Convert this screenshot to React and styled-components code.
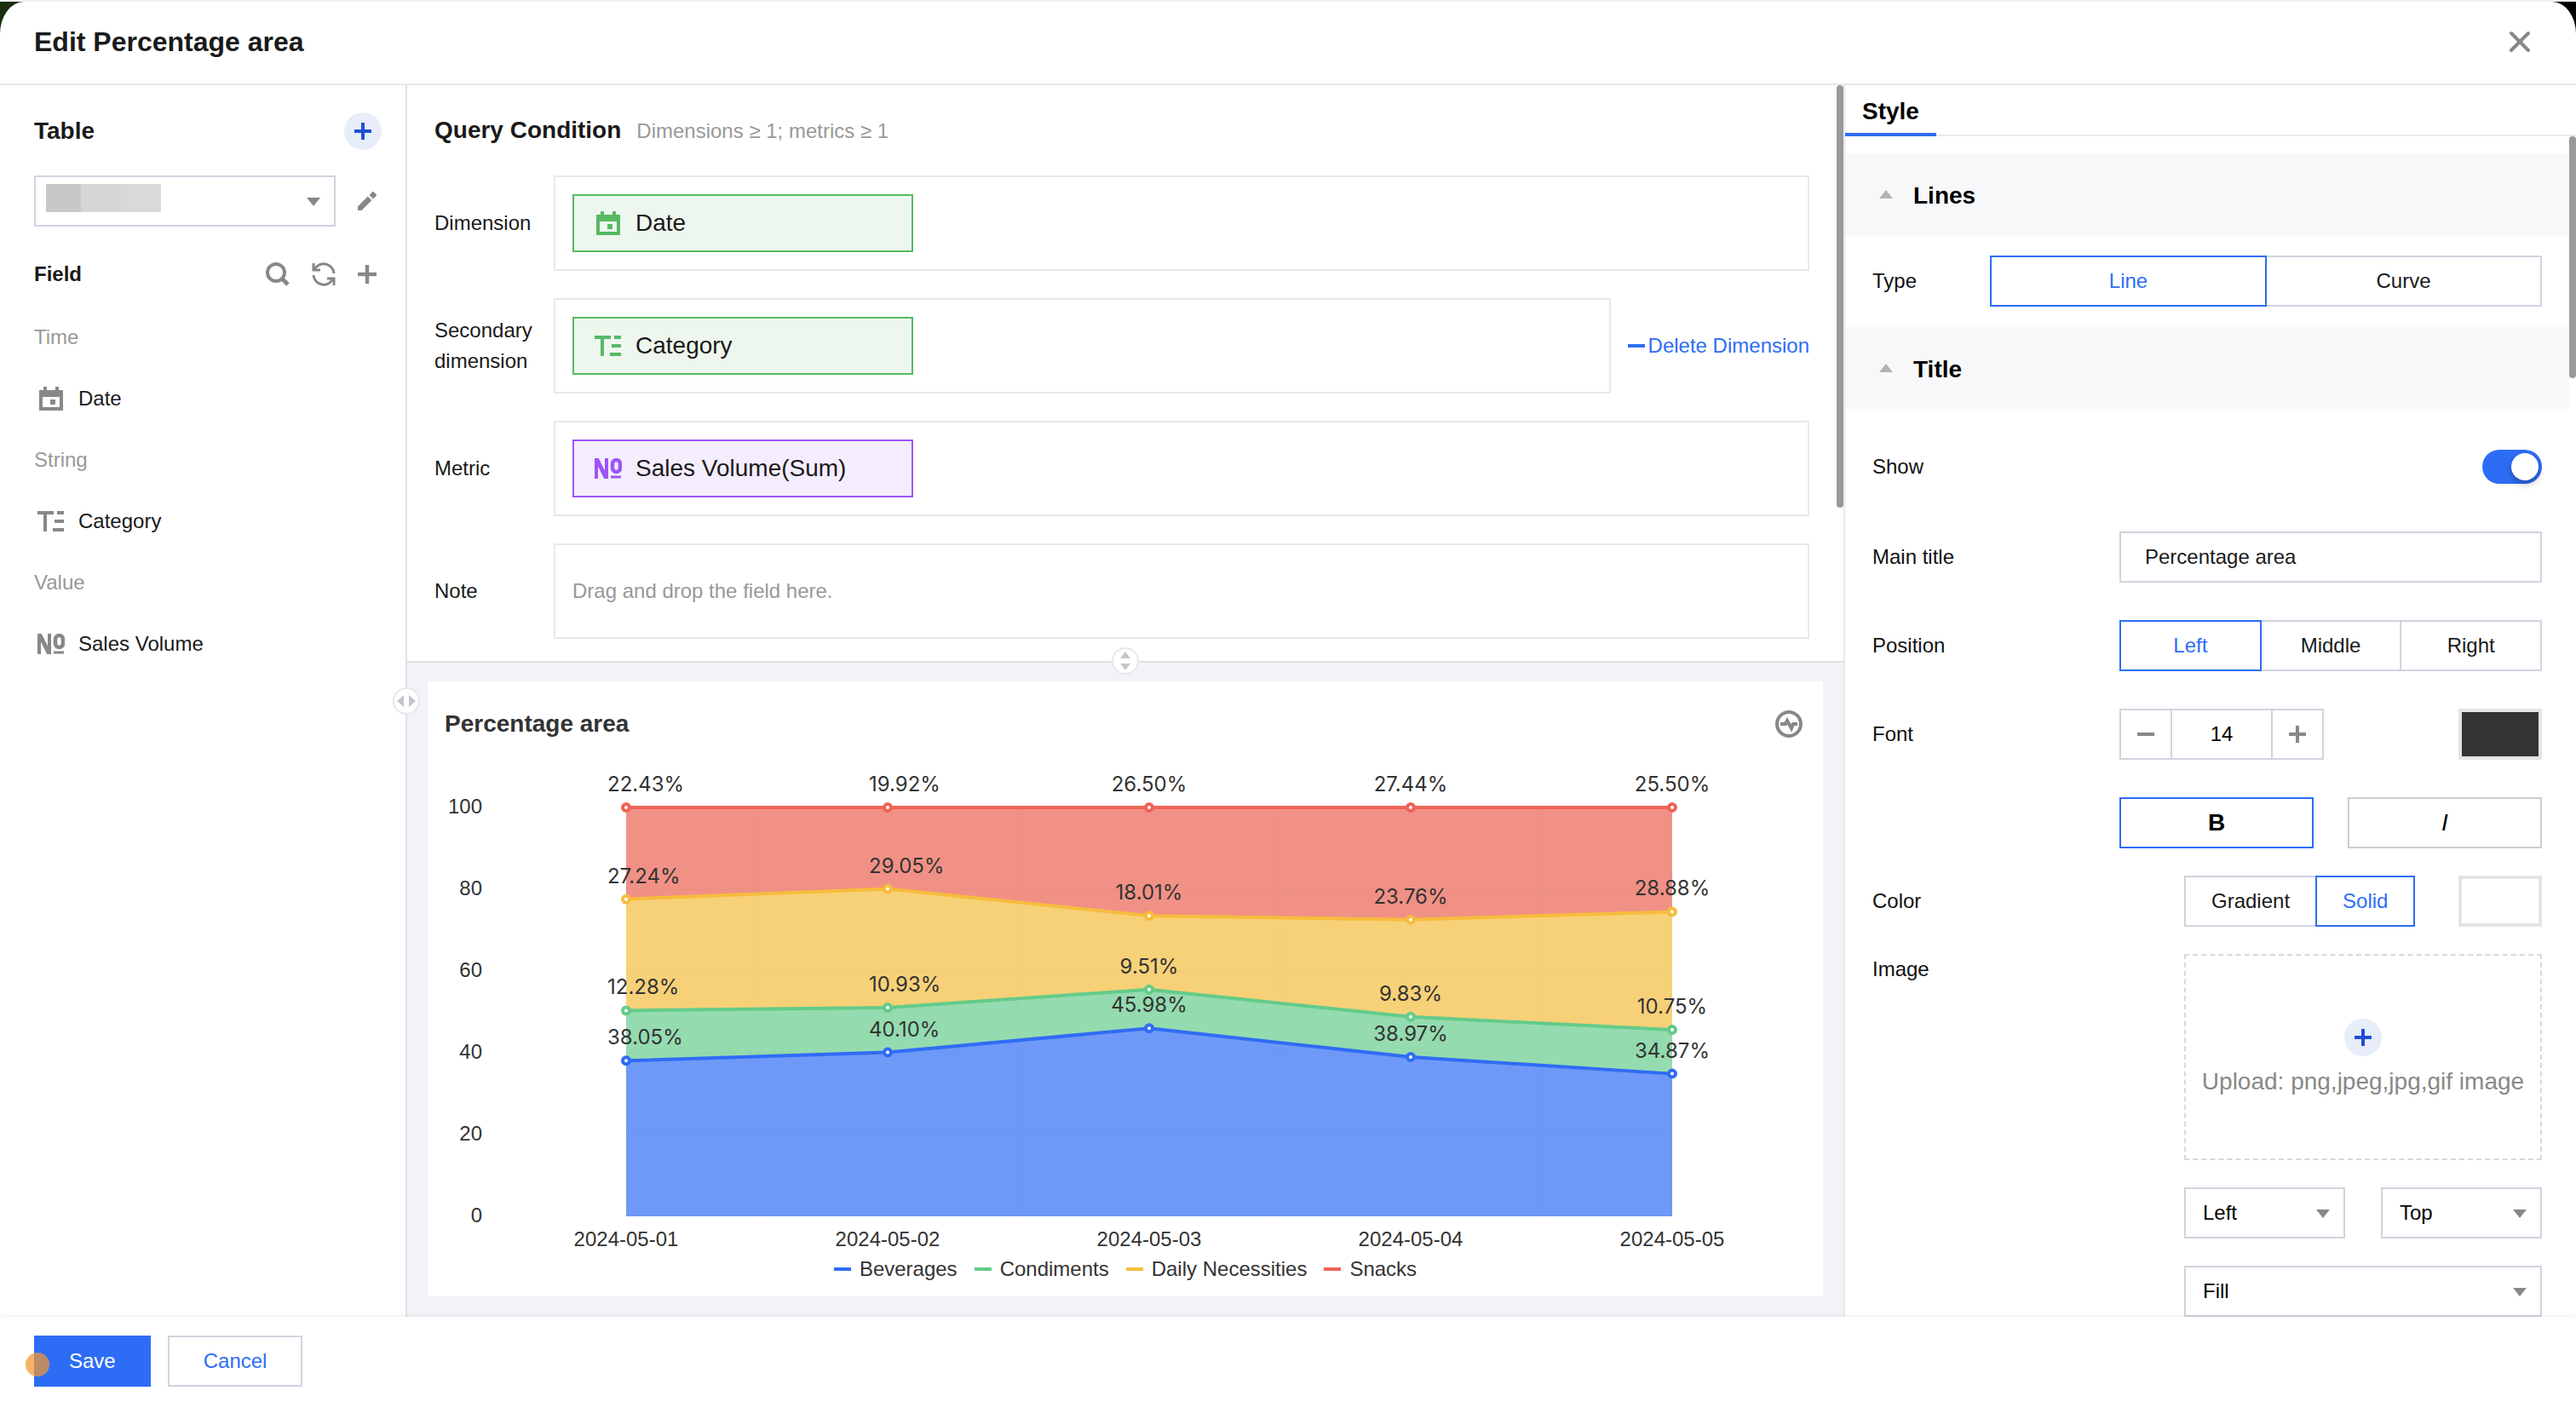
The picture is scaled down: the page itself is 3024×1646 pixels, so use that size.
import { useState } from "react";
import styled, { createGlobalStyle, css } from "styled-components";

const categories = [
  "2024-05-01",
  "2024-05-02",
  "2024-05-03",
  "2024-05-04",
  "2024-05-05",
];

const series = [
  {
    name: "Beverages",
    line: "#2f6cf6",
    area: "#6f99f8",
    values: [38.05, 40.1, 45.98, 38.97, 34.87],
  },
  {
    name: "Condiments",
    line: "#64cb8a",
    area: "#94dbaf",
    values: [12.28, 10.93, 9.51, 9.83, 10.75],
  },
  {
    name: "Daily Necessities",
    line: "#f7bc3c",
    area: "#f7d178",
    values: [27.24, 29.05, 18.01, 23.76, 28.88],
  },
  {
    name: "Snacks",
    line: "#ee6457",
    area: "#f19186",
    values: [22.43, 19.92, 26.5, 27.44, 25.5],
  },
];

const fieldGroups = [
  { title: "Time", icon: "date", field: "Date" },
  { title: "String", icon: "text", field: "Category" },
  { title: "Value", icon: "number", field: "Sales Volume" },
];

/* ---------- icons ---------- */

const TypeIcon = ({ type }) => {
  if (type === "date") {
    return (
      <svg width="32" height="28" viewBox="0 0 32 28" fill="currentColor">
        <rect x="7" y="0" width="4" height="5" />
        <rect x="21" y="0" width="4" height="5" />
        <path d="M2 4h28v24H2zM6 12v12h20V12z" fillRule="evenodd" />
        <rect x="15" y="15" width="6" height="6" />
      </svg>
    );
  }
  if (type === "text") {
    return (
      <svg width="32" height="24" viewBox="0 0 32 24" fill="currentColor">
        <rect x="0" y="0" width="19" height="4" />
        <rect x="7" y="0" width="4" height="24" />
        <rect x="23" y="0" width="8" height="4" />
        <rect x="20" y="10" width="11" height="4" />
        <rect x="18" y="20" width="13" height="4" />
      </svg>
    );
  }
  return (
    <svg
      width="32"
      height="24"
      viewBox="0 0 32 24"
      fill="none"
      stroke="currentColor"
      strokeWidth="4"
    >
      <line x1="2" y1="0" x2="2" y2="24" />
      <line x1="14" y1="0" x2="14" y2="24" />
      <line x1="2" y1="0" x2="14" y2="24" strokeWidth="5" />
      <rect x="21" y="2" width="9" height="14" rx="4.5" strokeWidth="4.5" />
      <line x1="19" y1="22" x2="31" y2="22" strokeWidth="3" />
    </svg>
  );
};

const PlusIcon = ({ size = 20 }) => (
  <svg width={size} height={size} viewBox="0 0 20 20" fill="currentColor">
    <rect x="8" y="0" width="4" height="20" />
    <rect x="0" y="8" width="20" height="4" />
  </svg>
);

const MinusIcon = () => (
  <svg width="20" height="4" viewBox="0 0 20 4" fill="currentColor">
    <rect width="20" height="4" />
  </svg>
);

const SearchIcon = () => (
  <svg
    width="28"
    height="28"
    viewBox="1 1 28 28"
    fill="none"
    stroke="currentColor"
    strokeWidth="4"
  >
    <circle cx="13" cy="13" r="10" />
    <line x1="20" y1="20" x2="27" y2="27" strokeWidth="5" />
  </svg>
);

const RefreshIcon = () => (
  <svg
    width="28"
    height="28"
    viewBox="1 1 28 28"
    fill="none"
    stroke="currentColor"
    strokeWidth="3"
  >
    <path d="M3 2v8h8" />
    <path d="M4 10a12 12 0 0 1 23 4" />
    <path d="M27 28v-8h-8" />
    <path d="M26 20a12 12 0 0 1-23-4" />
  </svg>
);

const PencilIcon = () => (
  <svg width="22" height="22" viewBox="3 3 18 18" fill="currentColor">
    <path d="M3 17.25V21h3.75L16.4 11.3l-3.75-3.75L3 17.25zM20.71 7.04a1 1 0 0 0 0-1.41l-2.34-2.34a1 1 0 0 0-1.41 0l-2.9 2.9 3.75 3.75 2.9-2.9z" />
  </svg>
);

const CloseIcon = () => (
  <svg
    width="28"
    height="28"
    viewBox="0 0 28 28"
    stroke="currentColor"
    strokeWidth="4"
    strokeLinecap="round"
  >
    <path d="M4 4l20 20M24 4L4 24" />
  </svg>
);

const PulseIcon = () => (
  <svg
    width="32"
    height="32"
    viewBox="0 0 32 32"
    fill="none"
    stroke="currentColor"
    strokeWidth="4"
  >
    <circle cx="16" cy="16" r="14" />
    <path d="M6 16h6l2-4 5 9 2-5h5" />
  </svg>
);

const Triangle = ({ up }) => (
  <svg width="16" height="10" viewBox="0 0 16 10" fill="currentColor">
    <path d={up ? "M0 10h16L8 0z" : "M0 0h16L8 10z"} />
  </svg>
);

/* ---------- chart ---------- */

const pointX = (index) => 233 + index * 307;
const pointY = (value) => 528 - value * 4.8;

const stacked = series.map((item, level) => ({
  ...item,
  points: item.values.map((_, index) => {
    const total = series
      .slice(0, level + 1)
      .reduce((sum, current) => sum + current.values[index], 0);
    return [pointX(index), pointY(Math.min(total, 100))];
  }),
}));

const PercentageChart = () => (
  <Plot viewBox="0 0 1638 576" role="img" aria-label="Percentage area">
    {[...stacked].reverse().map((item) => (
      <polygon
        key={item.name}
        fill={item.area}
        points={`${item.points.join(" ")} ${pointX(4)},528 ${pointX(0)},528`}
      />
    ))}
    <g stroke="#000" strokeOpacity="0.01" strokeWidth="2">
      {[20, 40, 60, 80].map((tick) => (
        <line
          key={tick}
          x1={pointX(0)}
          x2={pointX(4)}
          y1={pointY(tick)}
          y2={pointY(tick)}
        />
      ))}
      {[0, 1, 2, 3].map((index) => (
        <line
          key={index}
          x1={pointX(index + 0.5)}
          x2={pointX(index + 0.5)}
          y1="48"
          y2="528"
        />
      ))}
    </g>
    {stacked.map((item) => (
      <g key={item.name} stroke={item.line} strokeWidth="4">
        <polyline points={item.points.join(" ")} fill="none" />
        {item.points.map(([x, y]) => (
          <circle key={x} cx={x} cy={y} r="4" fill="#fff" />
        ))}
      </g>
    ))}
    {stacked.map((item) =>
      item.points.map(([x, y], index) => (
        <ValueText
          key={`${item.name}-${index}`}
          x={index < 2 ? x - 22 : x}
          y={y - 19}
          textAnchor={index < 2 ? "start" : "middle"}
        >
          {item.values[index].toFixed(2)}%
        </ValueText>
      ))
    )}
    {[0, 20, 40, 60, 80, 100].map((tick) => (
      <AxisText key={tick} x="64" y={pointY(tick) + 7} textAnchor="end">
        {tick}
      </AxisText>
    ))}
    {categories.map((category, index) => (
      <AxisText key={category} x={pointX(index)} y="563" textAnchor="middle">
        {category}
      </AxisText>
    ))}
  </Plot>
);

/* ---------- shared controls ---------- */

const Segmented = ({ options, value, onChange, label, compact }) => (
  <SegmentGroup role="group" aria-label={label} $compact={compact}>
    {options.map((option) => (
      <Segment
        key={option}
        type="button"
        $active={option === value}
        $compact={compact}
        aria-pressed={option === value}
        onClick={() => onChange(option)}
      >
        {option}
      </Segment>
    ))}
  </SegmentGroup>
);

const SelectBox = ({ label, options }) => (
  <SelectWrap>
    <Select aria-label={label}>
      {options.map((option) => (
        <option key={option}>{option}</option>
      ))}
    </Select>
    <SelectArrow>
      <Triangle />
    </SelectArrow>
  </SelectWrap>
);

/* ---------- panels ---------- */

const FieldPanel = () => (
  <Sidebar>
    <SidebarTop>
      <SectionTitle>Table</SectionTitle>
      <RoundButton type="button" aria-label="Add table">
        <PlusIcon />
      </RoundButton>
    </SidebarTop>
    <TableRow>
      <SelectWrap>
        <Select aria-label="Table" />
        <MaskedName>
          <MaskBlock $width="41px" $tone="#c8c8c8" />
          <MaskBlock $width="47px" $tone="#d5d7d6" />
          <MaskBlock $width="47px" $tone="#d9d9d9" />
        </MaskedName>
        <SelectArrow>
          <Triangle />
        </SelectArrow>
      </SelectWrap>
      <IconButton type="button" aria-label="Rename table">
        <PencilIcon />
      </IconButton>
    </TableRow>
    <FieldTop>
      <FieldTitle>Field</FieldTitle>
      <IconButton type="button" aria-label="Search field">
        <SearchIcon />
      </IconButton>
      <IconButton type="button" aria-label="Refresh fields">
        <RefreshIcon />
      </IconButton>
      <IconButton type="button" aria-label="Add field">
        <PlusIcon size={22} />
      </IconButton>
    </FieldTop>
    <FieldList>
      {fieldGroups.map(({ title, icon, field }) => (
        <FieldGroup key={title}>
          <GroupName>{title}</GroupName>
          <FieldItem>
            <TypeIcon type={icon} />
            <span>{field}</span>
          </FieldItem>
        </FieldGroup>
      ))}
    </FieldList>
    <SideHandle>
      <svg width="22" height="14" viewBox="0 0 22 14" fill="#c3c6cc">
        <path d="M8 0v14L0 7zM14 0v14l8-7z" />
      </svg>
    </SideHandle>
  </Sidebar>
);

const QueryPanel = () => (
  <Query>
    <QueryContent>
      <QueryHead>
        <SectionTitle>Query Condition</SectionTitle>
        <Hint>Dimensions ≥ 1; metrics ≥ 1</Hint>
      </QueryHead>
      <QueryRows>
        <QueryRow>
          <QueryLabel>Dimension</QueryLabel>
          <DropZone>
            <Chip $kind="dimension">
              <TypeIcon type="date" />
              <span>Date</span>
            </Chip>
          </DropZone>
        </QueryRow>
        <QueryRow>
          <QueryLabel>Secondary dimension</QueryLabel>
          <DropZone>
            <Chip $kind="dimension">
              <TypeIcon type="text" />
              <span>Category</span>
            </Chip>
          </DropZone>
          <DeleteLink type="button">
            <MinusIcon />
            Delete Dimension
          </DeleteLink>
        </QueryRow>
        <QueryRow>
          <QueryLabel>Metric</QueryLabel>
          <DropZone>
            <Chip $kind="metric">
              <TypeIcon type="number" />
              <span>Sales Volume(Sum)</span>
            </Chip>
          </DropZone>
        </QueryRow>
        <QueryRow>
          <QueryLabel>Note</QueryLabel>
          <DropZone>
            <Placeholder>Drag and drop the field here.</Placeholder>
          </DropZone>
        </QueryRow>
      </QueryRows>
    </QueryContent>
    <ScrollTrack>
      <ScrollThumb $length="496px" />
    </ScrollTrack>
    <BottomHandle>
      <svg width="12" height="22" viewBox="0 0 12 22" fill="#c3c6cc">
        <path d="M0 8h12L6 0zM0 14h12l-6 8z" />
      </svg>
    </BottomHandle>
  </Query>
);

const ChartPanel = () => (
  <Preview>
    <ChartCard>
      <ChartHead>
        <ChartTitle>Percentage area</ChartTitle>
        <IconButton type="button" aria-label="Analysis">
          <PulseIcon />
        </IconButton>
      </ChartHead>
      <PercentageChart />
      <Legend>
        {series.map(({ name, line }) => (
          <LegendItem key={name} $color={line}>
            {name}
          </LegendItem>
        ))}
      </Legend>
    </ChartCard>
  </Preview>
);

const StylePanel = () => {
  const [lineType, setLineType] = useState("Line");
  const [position, setPosition] = useState("Left");
  const [fill, setFill] = useState("Solid");

  return (
    <StyleSide>
      <Tabs>
        <Tab type="button">Style</Tab>
      </Tabs>
      <StyleBody>
        <StyleContent>
          <Band>
            <Triangle up />
            <BandTitle>Lines</BandTitle>
          </Band>
          <TypeRow>
            <RowLabel as="span">Type</RowLabel>
            <WideControl>
              <Segmented
                label="Type"
                options={["Line", "Curve"]}
                value={lineType}
                onChange={setLineType}
              />
            </WideControl>
          </TypeRow>
          <Band>
            <Triangle up />
            <BandTitle>Title</BandTitle>
          </Band>
          <TitleForm>
            <FormRow>
              <RowLabel htmlFor="show-title">Show</RowLabel>
              <Toggle type="checkbox" id="show-title" defaultChecked />
            </FormRow>
            <FormRow>
              <RowLabel htmlFor="main-title">Main title</RowLabel>
              <Control>
                <TextInput id="main-title" defaultValue="Percentage area" />
              </Control>
            </FormRow>
            <FormRow>
              <RowLabel as="span">Position</RowLabel>
              <Control>
                <Segmented
                  label="Position"
                  options={["Left", "Middle", "Right"]}
                  value={position}
                  onChange={setPosition}
                />
              </Control>
            </FormRow>
            <FormRow>
              <RowLabel htmlFor="font-size">Font</RowLabel>
              <Control>
                <Stepper>
                  <StepButton type="button" aria-label="Smaller">
                    <MinusIcon />
                  </StepButton>
                  <StepInput id="font-size" defaultValue="14" />
                  <StepButton type="button" aria-label="Larger">
                    <PlusIcon />
                  </StepButton>
                </Stepper>
                <Swatch
                  type="color"
                  aria-label="Font color"
                  defaultValue="#333333"
                />
              </Control>
            </FormRow>
            <FormRow>
              <span />
              <Control>
                <FontButton type="button" $active aria-label="Bold">
                  <b>B</b>
                </FontButton>
                <FontButton type="button" aria-label="Italic">
                  <i>I</i>
                </FontButton>
              </Control>
            </FormRow>
          </TitleForm>
          <BackgroundForm>
            <FormRow>
              <RowLabel as="span">Color</RowLabel>
              <NarrowControl>
                <Segmented
                  label="Color"
                  options={["Gradient", "Solid"]}
                  value={fill}
                  onChange={setFill}
                  compact
                />
                <Swatch
                  type="color"
                  aria-label="Background color"
                  defaultValue="#ffffff"
                />
              </NarrowControl>
            </FormRow>
            <FormRow $top>
              <RowLabel htmlFor="title-image">Image</RowLabel>
              <ImageControls>
                <Upload>
                  <RoundButton as="span">
                    <PlusIcon />
                  </RoundButton>
                  Upload: png,jpeg,jpg,gif image
                  <input type="file" id="title-image" />
                </Upload>
                <SelectPair>
                  <SelectBox
                    label="Horizontal position"
                    options={["Left", "Center", "Right"]}
                  />
                  <SelectBox
                    label="Vertical position"
                    options={["Top", "Middle", "Bottom"]}
                  />
                </SelectPair>
                <SelectBox label="Image size" options={["Fill", "Fit"]} />
              </ImageControls>
            </FormRow>
          </BackgroundForm>
        </StyleContent>
        <ScrollTrack>
          <ScrollThumb $length="284px" />
        </ScrollTrack>
      </StyleBody>
    </StyleSide>
  );
};

const App = () => {
  return (
    <>
      <GlobalStyle />
      <Backdrop>
        <Dialog>
          <Header>
            <DialogTitle>Edit Percentage area</DialogTitle>
            <IconButton type="button" aria-label="Close">
              <CloseIcon />
            </IconButton>
          </Header>
          <Body>
            <FieldPanel />
            <Main>
              <QueryPanel />
              <ChartPanel />
            </Main>
            <StylePanel />
          </Body>
          <Footer>
            <SaveButton type="button">Save</SaveButton>
            <CancelButton type="button">Cancel</CancelButton>
            <Pointer />
          </Footer>
        </Dialog>
      </Backdrop>
    </>
  );
};

const GlobalStyle = createGlobalStyle`
  *,
  *::before,
  *::after {
    box-sizing: border-box;
  }

  body {
    margin: 0;
    color: #1a1a1a;
    font-family: "Liberation Sans", Arial, sans-serif;
    font-size: 24px;
    line-height: 36px;
  }

  button,
  input,
  select {
    margin: 0;
    color: inherit;
    font: inherit;
  }

  button {
    padding: 0;
    border: none;
    background: none;
    cursor: pointer;
  }

  svg {
    display: block;
    flex: none;
  }
`;

const Backdrop = styled.div`
  height: 100vh;
  border-top: 2px solid #f0f1f6;
  background: linear-gradient(to right, #1a3012 50%, #000 50%);
`;

const Dialog = styled.div`
  display: flex;
  flex-direction: column;
  height: 100%;
  overflow: hidden;
  border-radius: 28px 28px 0 0 / 38px 38px 0 0;
  background-color: #fff;
`;

const Header = styled.header`
  display: flex;
  align-items: center;
  justify-content: space-between;
  flex: none;
  height: 98px;
  padding: 0 52px 2px 40px;
  border-bottom: 2px solid #e8e9ee;
`;

const DialogTitle = styled.h1`
  margin: 0;
  font-size: 32px;
  line-height: 44px;
`;

const IconButton = styled.button`
  display: flex;
  color: #888;
`;

const Body = styled.div`
  display: flex;
  flex: 1;
  min-height: 0;
`;

/* left side */

const Sidebar = styled.aside`
  position: relative;
  flex: none;
  width: 478px;
  padding: 32px 28px 0 40px;
  border-right: 2px solid #e0e1e4;
`;

const SidebarTop = styled.div`
  display: flex;
  align-items: center;
  justify-content: space-between;
  margin-bottom: 30px;
`;

const SectionTitle = styled.h2`
  margin: 0;
  font-size: 28px;
  line-height: 42px;
`;

const RoundButton = styled.button`
  display: flex;
  align-items: center;
  justify-content: center;
  width: 44px;
  height: 44px;
  border-radius: 50%;
  background-color: #e7edf9;
  color: #1f4fd1;
`;

const TableRow = styled.div`
  display: flex;
  align-items: center;
  gap: 26px;
  padding-right: 6px;
`;

const SelectWrap = styled.div`
  position: relative;
  flex: 1;
  min-width: 0;
`;

const Select = styled.select`
  display: block;
  width: 100%;
  height: 60px;
  padding: 0 48px 0 20px;
  border: 2px solid #cfd4de;
  border-radius: 0;
  background-color: #fff;
  appearance: none;
`;

const SelectArrow = styled.span`
  position: absolute;
  top: 26px;
  right: 18px;
  color: #888;
  pointer-events: none;
`;

const MaskedName = styled.span`
  position: absolute;
  top: 10px;
  left: 14px;
  display: flex;
  pointer-events: none;
`;

const MaskBlock = styled.span`
  width: ${({ $width }) => $width};
  height: 33px;
  background-color: ${({ $tone }) => $tone};
`;

const FieldTop = styled.div`
  display: flex;
  align-items: center;
  gap: 26px;
  height: 36px;
  margin-top: 38px;
  padding-right: 6px;
`;

const FieldTitle = styled.h3`
  flex: 1;
  margin: 0;
  font-size: 24px;
`;

const FieldList = styled.div`
  display: flex;
  flex-direction: column;
  gap: 36px;
  margin-top: 38px;
`;

const FieldGroup = styled.div`
  display: flex;
  flex-direction: column;
  gap: 36px;
`;

const GroupName = styled.div`
  color: #999;
`;

const FieldItem = styled.div`
  display: flex;
  align-items: center;
  gap: 16px;
  padding-left: 4px;

  svg {
    color: #888;
  }
`;

const handle = css`
  position: absolute;
  z-index: 1;
  display: flex;
  align-items: center;
  justify-content: center;
  width: 32px;
  height: 32px;
  border: 2px solid #e6e8ed;
  border-radius: 50%;
  background-color: #fff;
`;

const SideHandle = styled.div`
  ${handle}
  top: calc(50% - 16px);
  right: -17px;
`;

const BottomHandle = styled.div`
  ${handle}
  bottom: -16px;
  left: calc(50% - 16px);
`;

/* centre */

const Main = styled.main`
  display: flex;
  flex-direction: column;
  flex: 1;
  min-width: 0;
`;

const Query = styled.section`
  position: relative;
  display: flex;
  border-bottom: 2px solid #dfe0e3;
`;

const QueryContent = styled.div`
  flex: 1;
  min-width: 0;
  padding: 32px 32px 26px;
`;

const QueryHead = styled.div`
  display: flex;
  align-items: baseline;
  gap: 18px;
  margin-bottom: 32px;
`;

const Hint = styled.span`
  color: #999;
`;

const QueryRows = styled.div`
  display: flex;
  flex-direction: column;
  gap: 32px;
`;

const QueryRow = styled.div`
  display: flex;
  align-items: center;
`;

const QueryLabel = styled.div`
  flex: none;
  width: 140px;
  padding-right: 16px;
`;

const DropZone = styled.div`
  display: flex;
  align-items: center;
  flex: 1;
  min-width: 0;
  height: 112px;
  padding: 0 20px;
  border: 2px solid #e8e9ee;
`;

const Chip = styled.div`
  display: flex;
  align-items: center;
  gap: 16px;
  width: 400px;
  height: 68px;
  padding: 0 24px;
  border: 2px solid;
  border-color: ${({ $kind }) => ($kind === "metric" ? "#9f55f7" : "#55b963")};
  background-color: ${({ $kind }) =>
    $kind === "metric" ? "#f4edfe" : "#eef7ee"};
  font-size: 28px;

  svg {
    color: ${({ $kind }) => ($kind === "metric" ? "#9f55f7" : "#55b963")};
  }
`;

const Placeholder = styled.span`
  color: #999;
`;

const DeleteLink = styled.button`
  display: flex;
  align-items: center;
  flex: none;
  gap: 4px;
  margin-left: 20px;
  color: #2d6df6;
`;

const ScrollTrack = styled.div`
  flex: none;
  width: 8px;
`;

const ScrollThumb = styled.div`
  height: ${({ $length }) => $length};
  border-radius: 4px;
  background-color: #999;
`;

const Preview = styled.section`
  flex: 1;
  min-height: 0;
  padding: 22px 24px 24px;
  background-color: #f2f3f7;
`;

const ChartCard = styled.div`
  height: 100%;
  overflow: hidden;
  background-color: #fff;
`;

const ChartHead = styled.div`
  display: flex;
  align-items: center;
  justify-content: space-between;
  height: 100px;
  padding: 0 24px 0 20px;
`;

const ChartTitle = styled.h2`
  margin: 0;
  color: #333;
  font-size: 28px;
`;

const Plot = styled.svg`
  width: 100%;
`;

const AxisText = styled.text`
  fill: #333;
  font-size: 24px;
`;

const ValueText = styled(AxisText)`
  font-family: Inter, sans-serif;
`;

const Legend = styled.div`
  display: flex;
  justify-content: center;
  gap: 20px;
  color: #333;
  line-height: 28px;
`;

const LegendItem = styled.span`
  display: flex;
  align-items: center;
  gap: 10px;

  &::before {
    width: 20px;
    height: 4px;
    background-color: ${({ $color }) => $color};
    content: "";
  }
`;

/* right side */

const StyleSide = styled.aside`
  display: flex;
  flex-direction: column;
  flex: none;
  width: 860px;
  border-left: 2px solid #e8e9ee;
  color: #000;
`;

const Tabs = styled.div`
  display: flex;
  flex: none;
  height: 60px;
  box-shadow: inset 0 -2px #e8e9ee;
`;

const Tab = styled.button`
  padding: 2px 20px 0;
  border-top: 4px solid transparent;
  border-bottom: 4px solid #2d6df6;
  font-size: 28px;
  font-weight: bold;
`;

const StyleBody = styled.div`
  display: flex;
  flex: 1;
  min-height: 0;
`;

const StyleContent = styled.div`
  flex: 1;
  min-width: 0;
  padding-top: 20px;
  overflow: hidden;
`;

const Band = styled.div`
  display: flex;
  align-items: center;
  gap: 24px;
  height: 96px;
  padding: 0 40px;
  background-color: #f7f8fa;

  svg {
    color: #b3b3b3;
  }
`;

const BandTitle = styled.h3`
  margin: 0;
  padding-top: 4px;
  font-size: 28px;
`;

const FormRow = styled.div`
  display: flex;
  align-items: ${({ $top }) => ($top ? "flex-start" : "center")};
  justify-content: space-between;
`;

const TypeRow = styled(FormRow)`
  padding: 24px 32px;
`;

const RowLabel = styled.label`
  color: #111;
`;

const TitleForm = styled.div`
  display: flex;
  flex-direction: column;
  gap: 44px;
  padding: 48px 32px 0;

  ${FormRow}:first-child {
    margin-bottom: 12px;
  }
`;

const BackgroundForm = styled.div`
  display: flex;
  flex-direction: column;
  gap: 32px;
  padding: 32px 32px 0;
`;

const Control = styled.div`
  display: flex;
  justify-content: space-between;
  width: 496px;
`;

const WideControl = styled(Control)`
  width: 648px;
`;

const NarrowControl = styled(Control)`
  width: 420px;
`;

const ImageControls = styled.div`
  display: flex;
  flex-direction: column;
  gap: 32px;
  width: 420px;
`;

const SegmentGroup = styled.div`
  display: flex;
  flex: ${({ $compact }) => ($compact ? "none" : 1)};
`;

const Segment = styled.button`
  position: relative;
  z-index: ${({ $active }) => ($active ? 1 : 0)};
  flex: ${({ $compact }) => ($compact ? "none" : "1 1 0")};
  height: 60px;
  padding: 0 30px;
  border: 2px solid ${({ $active }) => ($active ? "#2d6df6" : "#cfd4de")};
  color: ${({ $active }) => ($active ? "#2d6df6" : "#1a1a1a")};

  & + & {
    margin-left: -2px;
  }
`;

const Toggle = styled.input`
  width: 70px;
  height: 40px;
  padding: 4px;
  border-radius: 20px;
  background-color: #cfd4de;
  appearance: none;

  &::before {
    display: block;
    width: 32px;
    height: 32px;
    border-radius: 50%;
    background-color: #fff;
    box-shadow: 0 4px 8px rgba(0, 0, 0, 0.3);
    content: "";
  }

  &:checked {
    padding-left: 34px;
    background-color: #2d6df6;
  }
`;

const TextInput = styled.input`
  width: 100%;
  height: 60px;
  padding: 0 28px;
  border: 2px solid #cfd4de;
  color: #1a1a1a;
`;

const Stepper = styled.div`
  display: flex;
  width: 240px;
  height: 60px;
  border: 2px solid #cfd4de;
`;

const StepButton = styled.button`
  display: flex;
  align-items: center;
  justify-content: center;
  flex: 1;
  color: #888;
`;

const StepInput = styled.input`
  width: 120px;
  padding: 0;
  border: solid #cfd4de;
  border-width: 0 2px;
  text-align: center;
`;

const Swatch = styled.input`
  width: 98px;
  height: 60px;
  padding: 0;
  border: 4px solid #e3e4e7;
  background: none;
  appearance: none;

  &::-webkit-color-swatch-wrapper {
    padding: 0;
  }

  &::-webkit-color-swatch {
    border: none;
  }
`;

const FontButton = styled.button`
  width: 228px;
  height: 60px;
  border: 2px solid ${({ $active }) => ($active ? "#2d6df6" : "#ccc")};
  font-size: 28px;
`;

const Upload = styled.label`
  position: relative;
  display: flex;
  flex-direction: column;
  align-items: center;
  gap: 12px;
  height: 242px;
  padding-top: 74px;
  border: 2px dashed #d9d9d9;
  color: #888;
  font-size: 28px;
  white-space: nowrap;
  cursor: pointer;

  input {
    position: absolute;
    width: 1px;
    height: 1px;
    opacity: 0;
  }
`;

const SelectPair = styled.div`
  display: flex;
  gap: 42px;
`;

/* bottom */

const Footer = styled.footer`
  position: relative;
  z-index: 2;
  display: flex;
  align-items: center;
  flex: none;
  gap: 20px;
  height: 100px;
  padding: 4px 40px 0;
  background-color: #fff;
  box-shadow: 0 0 6px rgba(0, 0, 0, 0.1);
`;

const SaveButton = styled.button`
  height: 60px;
  padding: 0 41px;
  background-color: #2d6df6;
  color: #fff;
`;

const CancelButton = styled.button`
  height: 60px;
  padding: 0 40px;
  border: 2px solid #cfd4de;
  color: #2d6df6;
`;

const Pointer = styled.span`
  position: absolute;
  top: 42px;
  left: 30px;
  width: 28px;
  height: 28px;
  border-radius: 50%;
  background-color: rgba(242, 152, 48, 0.73);
`;

export default App;
